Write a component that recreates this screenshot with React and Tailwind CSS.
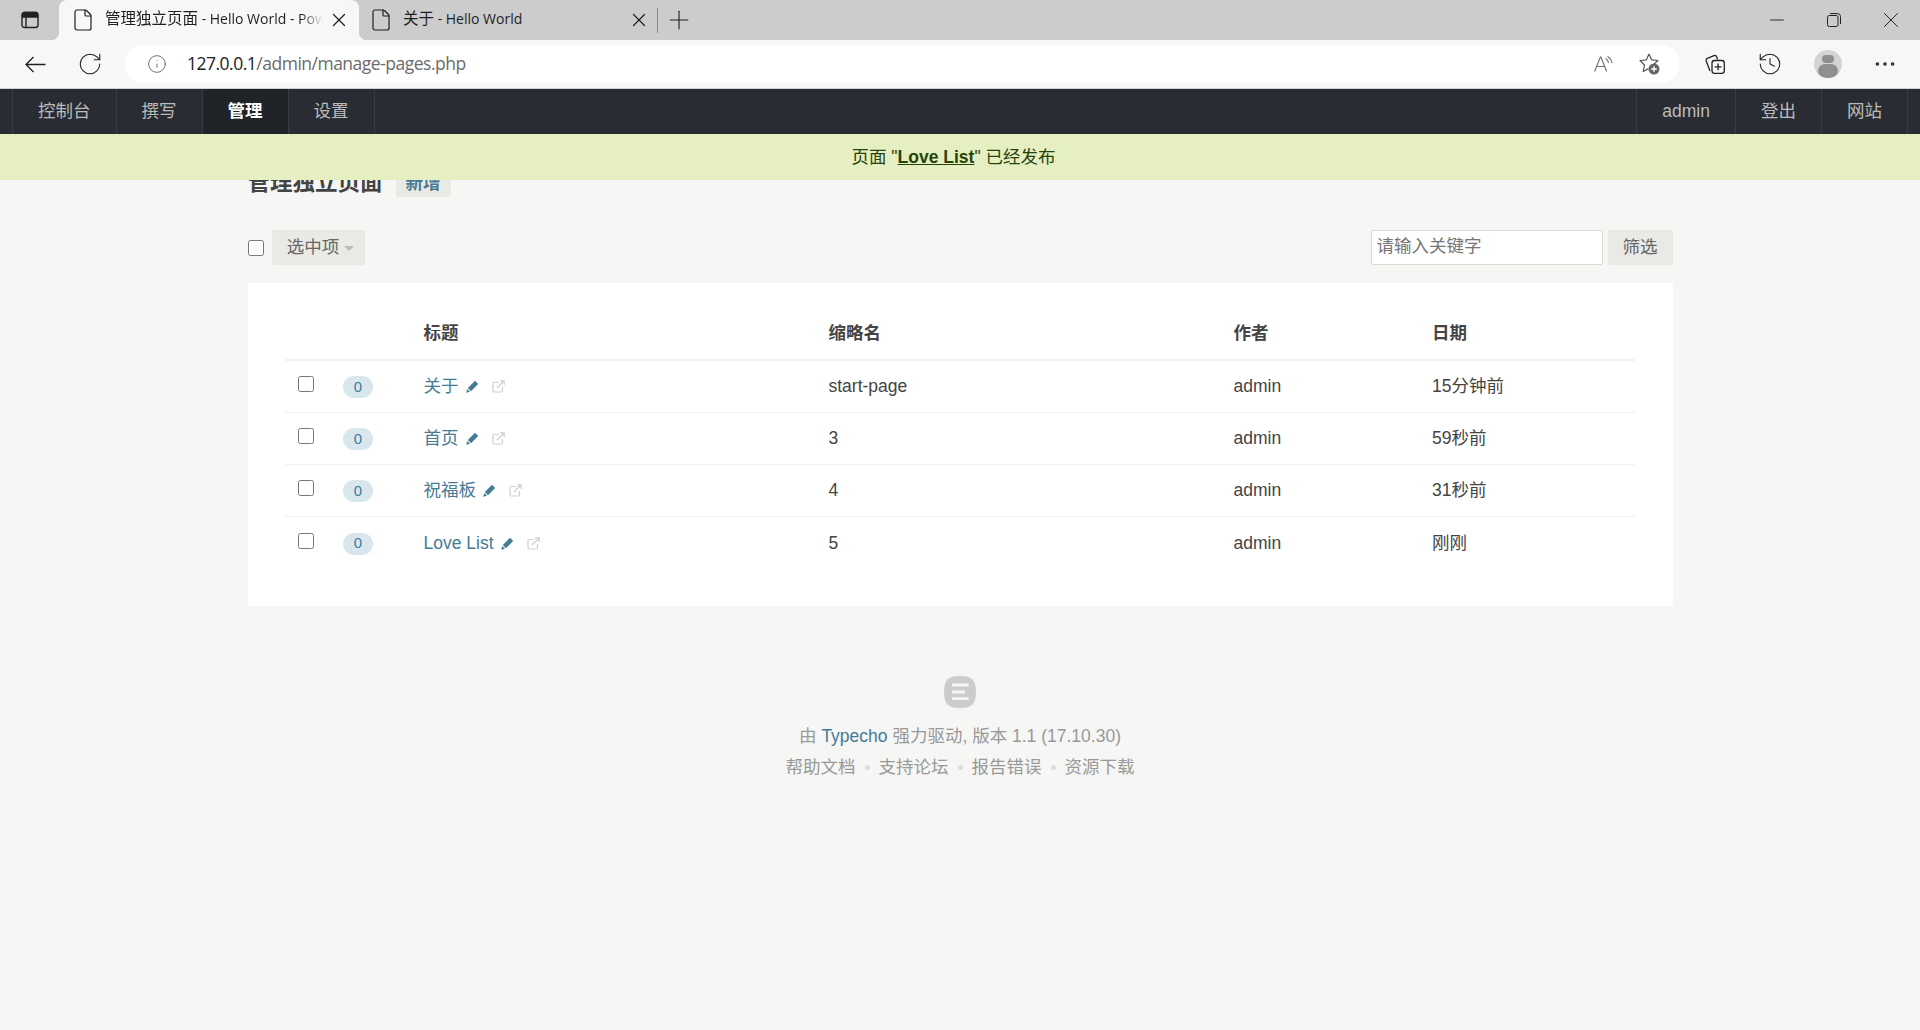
import React from "react";
import { RotateCw, Info, Plus, X, Minus, File, History, MoreHorizontal } from "lucide-react";

const SANS = "font-['Liberation_Sans','Noto_Sans_CJK_SC',sans-serif]";

const pages = [
  { title: "关于", slug: "start-page", date: "15分钟前" },
  { title: "首页", slug: "3", date: "59秒前" },
  { title: "祝福板", slug: "4", date: "31秒前" },
  { title: "Love List", slug: "5", date: "刚刚" },
];

const Pencil = () => (
  <svg viewBox="0 0 13 13" className="w-[13px] h-[13px] shrink-0">
    <path d="M9 .8 12.2 4 5 11.2 1.8 8z" fill="#467b96" />
    <path d="M1.2 9 4 11.8.3 12.8z" fill="#467b96" />
  </svg>
);

const External = () => (
  <svg viewBox="0 0 13 13" className="w-[13px] h-[13px] shrink-0" fill="none" stroke="#cfcfcf" strokeWidth="1.2">
    <path d="M7 2.5H2.2a1.2 1.2 0 0 0-1.2 1.2v7.1A1.2 1.2 0 0 0 2.2 12h7.1a1.2 1.2 0 0 0 1.2-1.2V7" />
    <path d="M5 8 12 1M8 .8h4.2V5" />
  </svg>
);

const TabBar = () => (
  <div className="flex h-10 bg-[#cccccc] items-stretch font-['Open_Sans','Noto_Sans_CJK_SC',sans-serif] text-[#1f1f1f]">
    <div className="w-[59px] flex items-center justify-center">
      <svg viewBox="0 0 18 18" className="w-[18px] h-[18px] ml-[1px]" fill="none" stroke="#222" strokeWidth="1.4">
        <rect x="1" y="1.5" width="16" height="15" rx="2.5" />
        <path d="M1.5 3.5a2 2 0 0 1 2-2h11a2 2 0 0 1 2 2v2.5h-15z" fill="#222" />
        <path d="M5 6v10" />
      </svg>
    </div>
    <div className="relative w-[300px] bg-[#f7f7f7] rounded-t-lg flex items-center pl-[12px] pr-[9px] before:absolute before:-left-2 before:bottom-0 before:w-2 before:h-2 before:bg-[radial-gradient(circle_at_0_0,#cccccc_8px,#f7f7f7_8.5px)] after:absolute after:-right-2 after:bottom-0 after:w-2 after:h-2 after:bg-[radial-gradient(circle_at_100%_0,#cccccc_8px,#f7f7f7_8.5px)]">
      <File size={24} strokeWidth={1.2} className="shrink-0" />
      <span className="ml-[10px] pb-[2px] w-[218px] overflow-hidden whitespace-nowrap text-[14px] [mask-image:linear-gradient(to_right,black_90%,transparent)]">
        <span className="text-[15.5px]">管理独立页面</span> - Hello World - Pow
      </span>
      <X size={22} strokeWidth={1.3} className="ml-auto" />
    </div>
    <div className="w-[298px] flex items-center pl-[10px] pr-[7px]">
      <File size={24} strokeWidth={1.2} className="shrink-0" />
      <span className="ml-[10px] pb-[2px] whitespace-nowrap text-[14px]">
        <span className="text-[15.5px]">关于</span> - Hello World
      </span>
      <X size={22} strokeWidth={1.3} className="ml-auto" />
    </div>
    <div className="w-px h-[25px] bg-[#8a8a8a] self-center" />
    <div className="flex items-center ml-[6px]">
      <Plus size={30} strokeWidth={0.9} />
    </div>
    <div className="ml-auto flex items-center text-[#222] mr-[1px]">
      <div className="w-[57px] flex justify-center"><Minus size={22} strokeWidth={1} /></div>
      <div className="w-[57px] flex justify-center">
        <svg viewBox="0 0 14 14" className="w-[14px] h-[14px]" fill="none" stroke="#222" strokeWidth="1">
          <rect x=".5" y="2.5" width="10.5" height="11" rx="1.8" />
          <path d="M3 .6h7.5a3 3 0 0 1 3 3V11" />
        </svg>
      </div>
      <div className="w-[57px] flex justify-center"><X size={26} strokeWidth={0.9} /></div>
    </div>
  </div>
);

const AddressBar = () => (
  <div className="flex h-[49px] bg-[#f7f7f7] items-center border-b border-[#d2d2d2] text-[#222]">
    <div className="w-[125px] flex items-center shrink-0 pl-[25px]">
      <svg viewBox="0 0 21 17" className="w-[21px] h-[17px]" fill="none" stroke="#222" strokeWidth="1.3">
        <path d="M20.5 8.5H1M8.5 1 1 8.5 8.5 16" />
      </svg>
      <RotateCw size={26} strokeWidth={1} className="ml-[31px]" />
    </div>
    <div className="w-[1555px] h-[38px] bg-white rounded-full flex items-center pl-[22px] pr-[20px]">
      <Info size={20} strokeWidth={1} className="text-[#555]" />
      <span className="ml-[20px] pb-[1px] text-[17.5px] font-['Open_Sans',sans-serif] tracking-[-0.5px] text-[#222]">
        127.0.0.1<span className="text-[#6b6b6b]">/admin/manage-pages.php</span>
      </span>
      <svg viewBox="0 0 20 16" className="ml-auto w-5 h-4" fill="none" stroke="#6e6e6e" strokeWidth="1.1">
        <path d="M.6 15.5 6.4 1h.6l5.6 14.5M2.6 10.5h8" />
        <path d="M11.5 2.5a5.5 5.5 0 0 1 3 4.5M13.5 .6a9 9 0 0 1 4.5 6.6" />
      </svg>
      <svg viewBox="0 0 22 22" className="w-[22px] h-[22px] ml-[24px]" fill="none">
        <path d="M11 1 13.6 6.8 20 7.5 15.5 11.5M11 1 8.4 6.8 2 7.5 6.5 12 5.2 18.5 10.5 15.6" stroke="#555" strokeWidth="1.2" strokeLinejoin="round" />
        <circle cx="16" cy="16" r="5.5" fill="#666666" />
        <path d="M16 13.2v5.6M13.2 16h5.6" stroke="#fff" strokeWidth="1.4" />
      </svg>
    </div>
    <div className="flex items-center flex-1 pl-[25px]">
      <svg viewBox="0 0 20 20" className="w-5 h-5" fill="none" stroke="#222" strokeWidth="1.3">
        <rect x="7" y="6.5" width="12.3" height="12.8" rx="2.5" />
        <path d="M13.1 9.5v6.8M9.7 12.9h6.8" />
        <path d="M5 17 1.2 7a2 2 0 0 1 1.2-2.6L9 1.6a2 2 0 0 1 2.6 1.2l1 2.6" />
      </svg>
      <History size={26} strokeWidth={1} className="ml-[32px]" />
      <div className="ml-[31px] w-7 h-7 rounded-full bg-[#d4d4d4] overflow-hidden flex flex-col items-center">
        <div className="w-3 h-3 rounded-full bg-[#8f8f8f] mt-[5px]" />
        <div className="w-5 h-5 rounded-full bg-[#8f8f8f] mt-[1px]" />
      </div>
      <MoreHorizontal size={26} strokeWidth={1.3} className="ml-[30px]" />
    </div>
  </div>
);

const NavItem = ({ children, active }) => (
  <a className={`px-[25px] flex items-center border-r border-[#383d45] ${active ? "bg-[#202328] text-white font-bold" : "text-[#bbbbbb]"}`}>
    {children}
  </a>
);

const AdminNav = () => (
  <div className="flex justify-between h-[45px] bg-[#292d33] text-[17.5px] pl-[12px] pr-[12px]">
    <div className="flex border-l border-[#383d45]">
      <NavItem>控制台</NavItem>
      <NavItem>撰写</NavItem>
      <NavItem active>管理</NavItem>
      <NavItem>设置</NavItem>
    </div>
    <div className="flex border-l border-[#383d45]">
      <NavItem>admin</NavItem>
      <NavItem>登出</NavItem>
      <NavItem>网站</NavItem>
    </div>
  </div>
);

const GRID = "grid grid-cols-[138.5px_405px_405px_198.5px_1fr] items-center";

const Table = () => (
  <div className="bg-white mt-[18px] pt-[37px] px-[37.5px] pb-[37px]">
    <div className={`${GRID} h-[41px] border-b-2 border-[#f0f0ec] font-bold pb-[12px]`}>
      <div />
      <div>标题</div>
      <div>缩略名</div>
      <div>作者</div>
      <div>日期</div>
    </div>
    {pages.map((p) => (
      <div key={p.title} className={`${GRID} h-[52px] border-b border-[#f0f0ec] last:border-b-0`}>
        <div className="flex items-center pl-[13px]">
          <input type="checkbox" className="w-4 h-4 m-0 -mt-[5px]" />
          <span className="ml-[29px] w-[30px] h-[22px] mt-[1px] rounded-full bg-[#d8e7ee] text-[#467b96] text-[15px] flex items-center justify-center">
            0
          </span>
        </div>
        <div className="flex items-center">
          <a className="text-[#467b96]">{p.title}</a>
          <span className="ml-[7px]"><Pencil /></span>
          <span className="ml-[13px]"><External /></span>
        </div>
        <div>{p.slug}</div>
        <div>admin</div>
        <div>{p.date}</div>
      </div>
    ))}
  </div>
);

const Dot = () => <span className="mx-[9px] w-[5px] h-[5px] rounded-full bg-[#dddddd]" />;

const Footer = () => (
  <div className="flex flex-col items-center mt-[70px] text-[#999999]">
    <svg viewBox="0 0 32 32" className="w-8 h-8">
      <path d="M16 0C28 0 32 4 32 16S28 32 16 32 0 28 0 16 4 0 16 0z" fill="#cccccc" />
      <path d="M8 9h16.5M8 16h13M8 22.7h16.5" stroke="#f6f6f5" strokeWidth="2.8" />
    </svg>
    <p className="mt-[13px] mb-[1px] leading-[30px]">
      由 <a className="text-[#467b96]">Typecho</a> 强力驱动, 版本 1.1 (17.10.30)
    </p>
    <p className="leading-[30px] flex items-center">
      帮助文档
      <Dot />
      支持论坛
      <Dot />
      报告错误
      <Dot />
      资源下载
    </p>
  </div>
);

const App = () => {
  return (
    <div className={`h-[1030px] overflow-hidden bg-[#f6f6f5] text-[#444444] text-[17.5px] ${SANS}`}>
      <TabBar />
      <AddressBar />
      <AdminNav />
      <div className="relative">
        {/*notice sits on top of the page title*/}
        <div className="absolute top-0 left-0 right-0 h-[46px] bg-[#e6efc2] text-[#264409] flex items-center justify-center pr-[13px]">
          <span>
            页面 "<a className="font-bold underline">Love List</a>" 已经发布
          </span>
        </div>
        <div className="w-[1425px] mx-auto pt-[34px]">
          <div className="flex items-center h-[30px]">
            <h2 className="text-[22.5px] font-bold leading-none">管理独立页面</h2>
            <a className="ml-[13px] px-[10px] h-[28px] flex items-center bg-[#e9e9e6] text-[#467b96] font-bold rounded-[2px]">
              新增
            </a>
          </div>
          <div className="flex items-center mt-[31px]">
            <input type="checkbox" className="w-4 h-4 m-0 mt-[2px]" />
            <button className="ml-[8px] h-[35px] w-[93px] pl-[5px] pt-[1px] bg-[#e9e9e6] rounded-[2px] text-[#666666] flex items-center justify-center">
              选中项
              <span className="ml-[5px] mt-[2px] border-x-[5px] border-x-transparent border-t-[5px] border-t-[#bbbbbb]" />
            </button>
            <input
              placeholder="请输入关键字"
              className="ml-auto w-[232px] h-[35px] bg-white border border-[#d9d9d6] rounded-[2px] px-[5px] pb-[2px] placeholder:text-[#757575] outline-none"
            />
            <button className="ml-[5px] w-[65px] h-[35px] mt-[1px] bg-[#e9e9e6] rounded-[2px] text-[#666666]">筛选</button>
          </div>
          <Table />
          <Footer />
        </div>
      </div>
    </div>
  );
};

export default App;
